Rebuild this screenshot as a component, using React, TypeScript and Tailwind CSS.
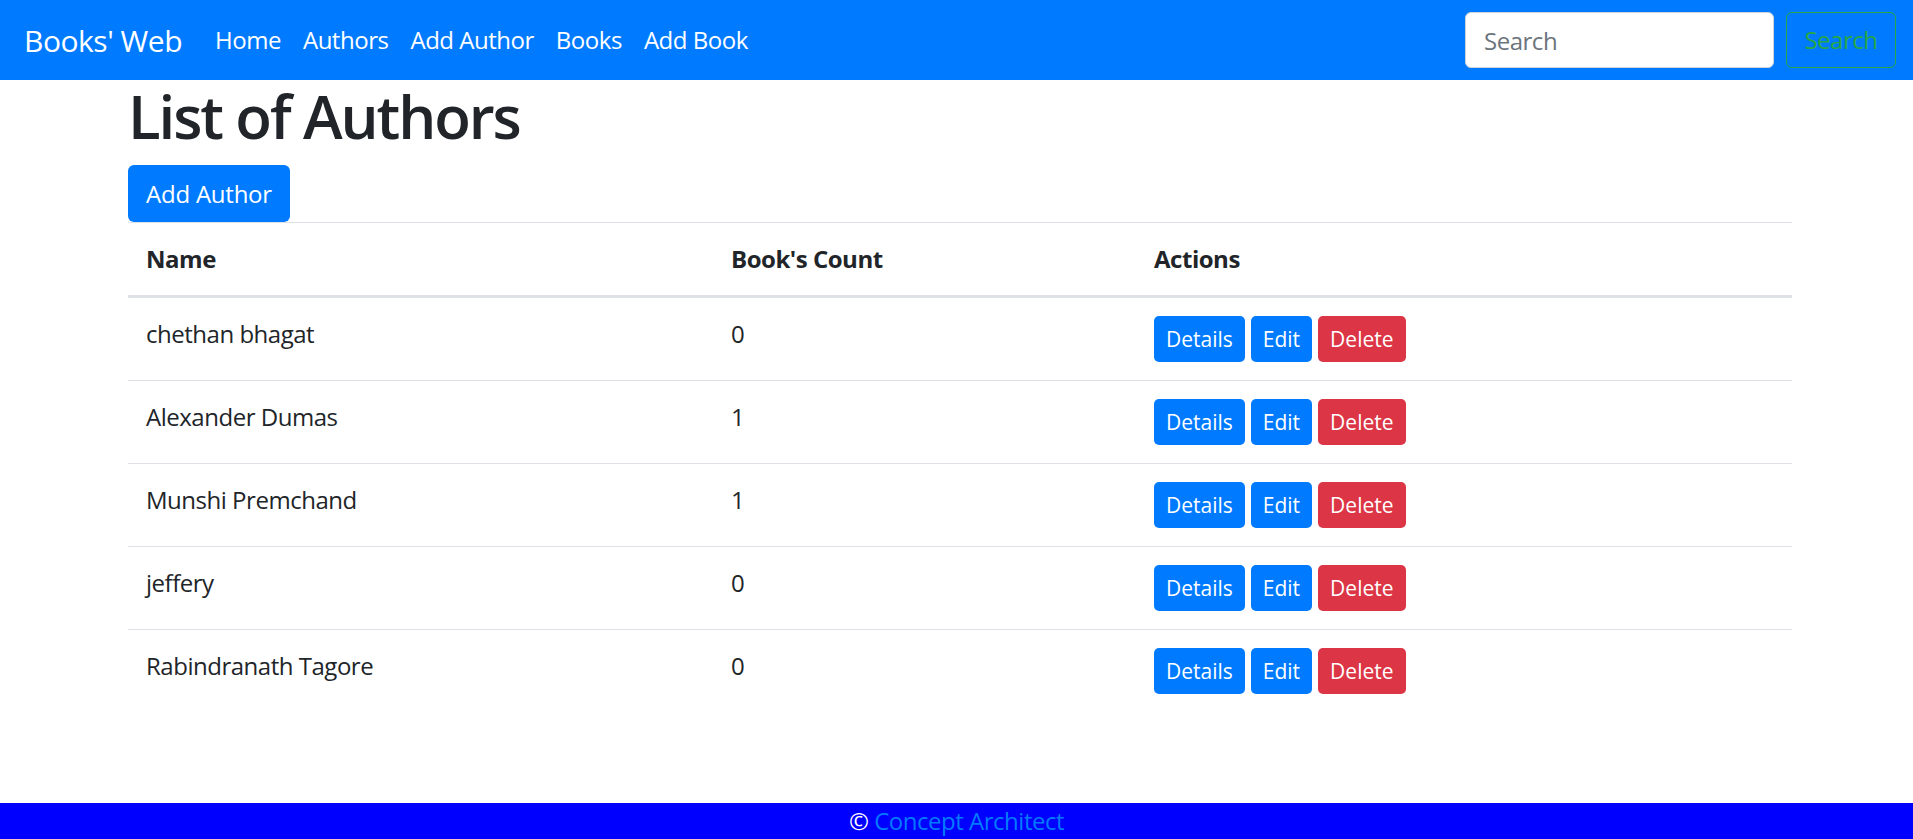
const authors = [
  { name: "chethan bhagat", count: 0 },
  { name: "Alexander Dumas", count: 1 },
  { name: "Munshi Premchand", count: 1 },
  { name: "jeffery", count: 0 },
  { name: "Rabindranath Tagore", count: 0 },
];

const links = ["Home", "Authors", "Add Author", "Books", "Add Book"];

function Navbar() {
  return (
    <nav className="flex h-[80px] items-center bg-[#007bff] pl-[24px] pr-[17px]">
      <a className="mr-[22px] text-[30px] leading-[45px] text-white">Books' Web</a>
      <ul className="flex">
        {links.map((l) => (
          <li key={l}>
            <a className="block px-[11px] text-[24px] leading-[36px] text-white">{l}</a>
          </li>
        ))}
      </ul>
      <form className="ml-auto flex items-center gap-[12px]">
        <input
          placeholder="Search"
          className="h-[56px] w-[309px] rounded-[6px] border border-[#ced4da] bg-white px-[18px] text-[24px] text-[#495057] outline-none placeholder:text-[#6c757d]"
        />
        <button
          type="button"
          className="h-[56px] w-[110px] rounded-[6px] border border-[#28a745] text-[24px] text-[#28a745]"
        >
          Search
        </button>
      </form>
    </nav>
  );
}

function SmallButton({ label, danger }: { label: string; danger?: boolean }) {
  return (
    <button
      type="button"
      className={
        danger
          ? "h-[46px] rounded-[5px] bg-[#dc3545] px-[12px] text-[21px] leading-[31px] tracking-normal text-white"
          : "h-[46px] rounded-[5px] bg-[#007bff] px-[12px] text-[21px] leading-[31px] tracking-normal text-white"
      }
    >
      {label}
    </button>
  );
}

export default function App() {
  return (
    <div
      className="flex min-h-screen flex-col bg-white tracking-[-0.03em] text-[#212529]"
      style={{ fontFamily: '"Open Sans", "Noto Sans", sans-serif' }}
    >
      <Navbar />
      <main className="ml-[128px] w-[1664px]">
        <h1 className="mb-[13px] text-[60px] font-semibold leading-[72px] tracking-[-0.035em]">
          List of Authors
        </h1>
        <button
          type="button"
          className="h-[57px] w-[162px] rounded-[6px] bg-[#007bff] text-[24px] leading-[36px] tracking-[-0.01em] text-white"
        >
          Add Author
        </button>
        <div className="grid grid-cols-[585px_423px_656px] border-t border-b-[3px] border-[#dee2e6] text-[24px] font-bold leading-[36px]">
          <div className="p-[18px]">Name</div>
          <div className="p-[18px]">Book's Count</div>
          <div className="p-[18px]">Actions</div>
        </div>
        {authors.map((a, i) => (
          <div
            key={a.name}
            className={
              i === 0
                ? "grid grid-cols-[585px_423px_656px] text-[24px] leading-[36px]"
                : "grid grid-cols-[585px_423px_656px] border-t border-[#dee2e6] text-[24px] leading-[36px]"
            }
          >
            <div className="p-[18px]">{a.name}</div>
            <div className="p-[18px]">{a.count}</div>
            <div className="flex gap-[6px] p-[18px]">
              <SmallButton label="Details" />
              <SmallButton label="Edit" />
              <SmallButton label="Delete" danger />
            </div>
          </div>
        ))}
      </main>
      <footer className="mt-auto h-[36px] bg-[#0000ff] text-center text-[24px] leading-[36px] text-white">
        © <a className="text-[#007bff]">Concept Architect</a>
      </footer>
    </div>
  );
}
